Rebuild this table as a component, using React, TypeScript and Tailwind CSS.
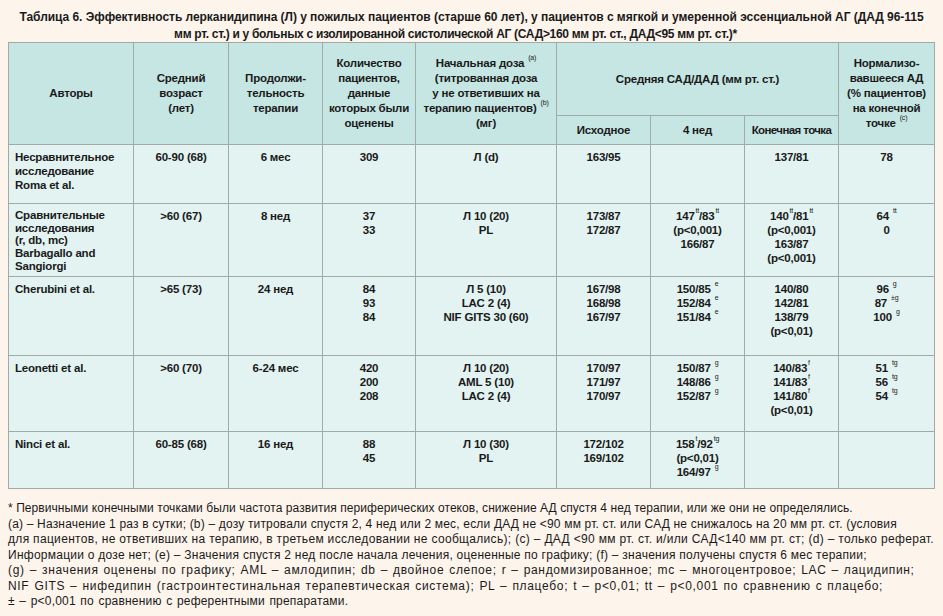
import React from 'react';

const cellBorder = 'border border-[#a2aaa8]';
const headCell = `${cellBorder} bg-[#c6e6e3] text-center align-middle px-1 leading-[15px]`;
const bodyCell = `${cellBorder} bg-[#e2f3f1] text-center align-top pt-[5px] px-1 leading-[14px]`;

const Sup: React.FC<{ children: React.ReactNode }> = ({ children }) => (
  <sup className="text-[7px] font-normal align-[4px] leading-none ml-[1px]">{children}</sup>
);

const Lines: React.FC<{ items: React.ReactNode[] }> = ({ items }) => (
  <>
    {items.map((it, i) => (
      <div key={i} className="whitespace-nowrap">{it}</div>
    ))}
  </>
);

interface Row {
  author: React.ReactNode[];
  age: string;
  duration: string;
  count: string[];
  dose: React.ReactNode[];
  base: string[];
  week4: React.ReactNode[];
  end: React.ReactNode[];
  norm: React.ReactNode[];
  height: string;
}

const rows: Row[] = [
  {
    author: ['Несравнительное', 'исследование', 'Roma et al.'],
    age: '60-90 (68)',
    duration: '6 мес',
    count: ['309'],
    dose: ['Л (d)'],
    base: ['163/95'],
    week4: [],
    end: ['137/81'],
    norm: ['78'],
    height: 'h-[59px]',
  },
  {
    author: ['Сравнительные', 'исследования', '(r, db, mc)', 'Barbagallo and', 'Sangiorgi'],
    age: '>60 (67)',
    duration: '8 нед',
    count: ['37', '33'],
    dose: ['Л 10 (20)', 'PL'],
    base: ['173/87', '172/87'],
    week4: [<>147<Sup>tt</Sup>/83<Sup>tt</Sup></>, '(p<0,001)', '166/87'],
    end: [<>140<Sup>tt</Sup>/81<Sup>tt</Sup></>, '(p<0,001)', '163/87', '(p<0,001)'],
    norm: [<>64 <Sup>tt</Sup></>, '0'],
    height: 'h-[73px]',
  },
  {
    author: ['Cherubini et al.'],
    age: '>65 (73)',
    duration: '24 нед',
    count: ['84', '93', '84'],
    dose: ['Л 5 (10)', 'LAC 2 (4)', 'NIF GITS 30 (60)'],
    base: ['167/98', '168/98', '167/97'],
    week4: [<>150/85 <Sup>e</Sup></>, <>152/84 <Sup>e</Sup></>, <>151/84 <Sup>e</Sup></>],
    end: ['140/80', '142/81', '138/79', '(p<0,01)'],
    norm: [<>96 <Sup>g</Sup></>, <>87 <Sup>±g</Sup></>, <>100 <Sup>g</Sup></>],
    height: 'h-[79px]',
  },
  {
    author: ['Leonetti et al.'],
    age: '>60 (70)',
    duration: '6-24 мес',
    count: ['420', '200', '208'],
    dose: ['Л 10 (20)', 'AML 5 (10)', 'LAC 2 (4)'],
    base: ['170/97', '171/97', '170/97'],
    week4: [<>150/87 <Sup>g</Sup></>, <>148/86 <Sup>g</Sup></>, <>152/87 <Sup>g</Sup></>],
    end: [<>140/83<Sup>f</Sup></>, <>141/83<Sup>f</Sup></>, <>141/80<Sup>f</Sup></>, '(p<0,01)'],
    norm: [<>51 <Sup>tg</Sup></>, <>56 <Sup>tg</Sup></>, <>54 <Sup>tg</Sup></>],
    height: 'h-[76px]',
  },
  {
    author: ['Ninci et al.'],
    age: '60-85 (68)',
    duration: '16 нед',
    count: ['88', '45'],
    dose: ['Л 10 (30)', 'PL'],
    base: ['172/102', '169/102'],
    week4: [<>158<Sup>t</Sup>/92<Sup>tg</Sup></>, '(p<0,01)', <>164/97 <Sup>g</Sup></>],
    end: [],
    norm: [],
    height: 'h-[57px]',
  },
];

// each line carries its own tracking so the line ends land where the printed ones do
const footnotes: { text: string; cls: string }[] = [
  {
    text: '* Первичными конечными точками были частота развития периферических отеков, снижение АД спустя 4 нед терапии, или же они не определялись.',
    cls: 'tracking-[0.07px]',
  },
  {
    text: '(a) – Назначение 1 раз в сутки; (b) – дозу титровали спустя 2, 4 нед или 2 мес, если ДАД не <90 мм рт. ст. или САД не снижалось на 20 мм рт. ст. (условия',
    cls: 'tracking-[0.18px]',
  },
  {
    text: 'для пациентов, не ответивших на терапию, в третьем исследовании не сообщались); (c) – ДАД <90 мм рт. ст. и/или САД<140 мм рт. ст; (d) – только реферат.',
    cls: 'tracking-[0.32px]',
  },
  {
    text: 'Информации о дозе нет; (e) – Значения спустя 2 нед после начала лечения, оцененные по графику; (f) – значения получены спустя 6 мес терапии;',
    cls: 'tracking-[0.25px]',
  },
  {
    text: '(g) – значения оценены по графику; AML – амлодипин; db – двойное слепое; r – рандомизированное; mc – многоцентровое; LAC – лацидипин;',
    cls: 'tracking-[0.66px] [word-spacing:1px]',
  },
  {
    text: 'NIF GITS – нифедипин (гастроинтестинальная терапевтическая система); PL – плацебо; t – p<0,01; tt – p<0,001 по сравнению с плацебо;',
    cls: 'tracking-[0.68px] [word-spacing:1px]',
  },
  {
    text: '± – p<0,001 по сравнению с референтными препаратами.',
    cls: 'tracking-[0.2px] [word-spacing:1px]',
  },
];

export default function App() {
  return (
    <div
      className="w-[943px] h-[616px] overflow-hidden bg-[#fdf4ec] text-[#1a1a1a] px-[8px] pt-[9px]"
      style={{ fontFamily: '"Liberation Sans", Arial, sans-serif' }}
    >
      {/* Title */}
      <div className="text-center font-bold text-[12px] leading-[17px]">
        <div className="whitespace-nowrap tracking-[-0.04px]">
          Таблица 6. Эффективность лерканидипина (Л) у пожилых пациентов (старше 60 лет), у пациентов с мягкой и умеренной эссенциальной АГ (ДАД 96-115
        </div>
        <div className="whitespace-nowrap tracking-[-0.3px] pr-[32px]">
          мм рт. ст.) и у больных с изолированной систолической АГ (САД&gt;160 мм рт. ст., ДАД&lt;95 мм рт. ст.)*
        </div>
      </div>

      {/* Table */}
      <table className="-mt-[1px] border-collapse table-fixed w-[926px] text-[11.5px] font-bold tracking-[-0.2px]">
        <colgroup>
          <col className="w-[125px]" />
          <col className="w-[95px]" />
          <col className="w-[94px]" />
          <col className="w-[93px]" />
          <col className="w-[141px]" />
          <col className="w-[94px]" />
          <col className="w-[94px]" />
          <col className="w-[94px]" />
          <col className="w-[96px]" />
        </colgroup>
        <thead>
          <tr className="h-[73px]">
            <th rowSpan={2} className={headCell}>Авторы</th>
            <th rowSpan={2} className={headCell}>
              <Lines items={['Средний', 'возраст', '(лет)']} />
            </th>
            <th rowSpan={2} className={headCell}>
              <Lines items={['Продолжи-', 'тельность', 'терапии']} />
            </th>
            <th rowSpan={2} className={headCell}>
              <Lines items={['Количество', 'пациентов,', 'данные', 'которых были', 'оценены']} />
            </th>
            <th rowSpan={2} className={headCell}>
              <Lines
                items={[
                  <>Начальная доза <Sup>(a)</Sup></>,
                  '(титрованная доза',
                  'у не ответивших на',
                  <>терапию пациентов) <Sup>(b)</Sup></>,
                  '(мг)',
                ]}
              />
            </th>
            <th colSpan={3} className={headCell}>Средняя САД/ДАД (мм рт. ст.)</th>
            <th rowSpan={2} className={headCell}>
              <Lines
                items={['Нормализо-', 'вавшееся АД', '(% пациентов)', 'на конечной', <>точке <Sup>(c)</Sup></>]}
              />
            </th>
          </tr>
          <tr className="h-[29px]">
            <th className={headCell}>Исходное</th>
            <th className={headCell}>4 нед</th>
            <th className={`${headCell} tracking-[-0.6px]`}>Конечная точка</th>
          </tr>
        </thead>
        <tbody>
          {rows.map((r, i) => (
            <tr key={i} className={r.height}>
              <td className={`${bodyCell} text-left pl-[6px]`}>
                <div className={r.author.length > 3 ? 'leading-[12.7px]' : ''}>
                  <Lines items={r.author} />
                </div>
              </td>
              <td className={bodyCell}>{r.age}</td>
              <td className={bodyCell}>{r.duration}</td>
              <td className={bodyCell}><Lines items={r.count} /></td>
              <td className={bodyCell}><Lines items={r.dose} /></td>
              <td className={bodyCell}><Lines items={r.base} /></td>
              <td className={bodyCell}><Lines items={r.week4} /></td>
              <td className={bodyCell}><Lines items={r.end} /></td>
              <td className={bodyCell}><Lines items={r.norm} /></td>
            </tr>
          ))}
        </tbody>
      </table>

      {/* Footnotes */}
      <div className="mt-[12px] text-[12px] leading-[15.5px]">
        {footnotes.map((f, i) => (
          <div key={i} className={`whitespace-nowrap ${f.cls}`}>{f.text}</div>
        ))}
      </div>
    </div>
  );
}
